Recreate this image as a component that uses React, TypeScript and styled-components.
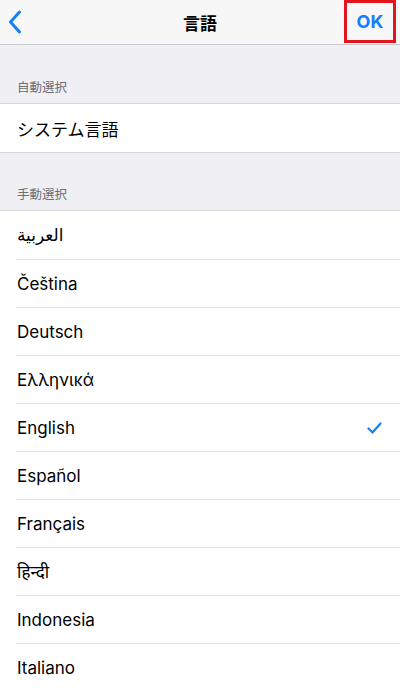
import React from "react";
import styled, { createGlobalStyle } from "styled-components";

const GlobalStyle = createGlobalStyle`
  html, body {
    margin: 0;
    padding: 0;
    background: #efeff4;
    font-family: Inter, "Noto Sans", "DejaVu Sans", "Noto Sans CJK JP", sans-serif;
    -webkit-font-smoothing: antialiased;
  }
`;

const Screen = styled.div`
  width: 400px;
  height: 688px;
  overflow: hidden;
  background: #efeff4;
`;

const NavBar = styled.header`
  height: 44px;
  display: grid;
  grid-template-columns: 60px 1fr 60px;
  align-items: center;
  background: #f7f7f8;
  border-bottom: 1px solid #c8c7cc;
`;

const BackButton = styled.button`
  border: 0;
  background: none;
  padding: 0 0 0 8px;
  height: 44px;
  display: flex;
  align-items: center;
`;

const Title = styled.h1`
  margin: 0;
  text-align: center;
  font-family: "Noto Sans CJK JP", sans-serif;
  font-size: 17px;
  font-weight: 700;
  color: #000;
`;

const OkButton = styled.button`
  justify-self: end;
  align-self: start;
  margin-right: 4px;
  width: 52px;
  height: 43px;
  box-sizing: border-box;
  border: 3px solid #e3141d;
  background: none;
  color: #157efb;
  font-family: Inter, "Noto Sans", sans-serif;
  font-size: 18px;
  font-weight: 700;
  padding: 0;
`;

const SectionHeader = styled.div<{ $height: number }>`
  height: ${(p) => p.$height}px;
  display: flex;
  align-items: flex-end;
  padding: 0 17px 7px;
  box-sizing: border-box;
  font-family: "Noto Sans CJK JP", sans-serif;
  font-size: 12.5px;
  color: #6d6d72;
`;

const Group = styled.ul`
  margin: 0;
  padding: 0;
  list-style: none;
  background: #fff;
  border-top: 1px solid #d8d8dc;
  border-bottom: 1px solid #d8d8dc;
`;

const Row = styled.li`
  height: 48px;
  display: flex;
  align-items: center;
  justify-content: space-between;
  margin-left: 17px;
  padding-right: 18px;
  font-size: 17px;
  color: #000;
  box-sizing: border-box;

  & + & {
    border-top: 1px solid #e0e0e4;
    margin-left: 16px;
    padding-left: 1px;
  }
`;

const Label = styled.span`
  font-family: Inter, "Noto Sans", "DejaVu Sans", "Noto Sans CJK JP", sans-serif;
`;

const languages = [
  "العربية",
  "Čeština",
  "Deutsch",
  "Ελληνικά",
  "English",
  "Español",
  "Français",
  "हिन्दी",
  "Indonesia",
  "Italiano",
];

const ChevronLeft = () => (
  <svg width="14" height="24" viewBox="0 0 14 24">
    <path
      d="M11.5 2 L2.5 12 L11.5 22"
      fill="none"
      stroke="#157efb"
      strokeWidth="3"
      strokeLinecap="round"
      strokeLinejoin="round"
    />
  </svg>
);

const Check = () => (
  <svg width="15" height="12" viewBox="0 0 15 12">
    <path
      d="M1.5 6.5 L5.5 10.5 L13.5 1.5"
      fill="none"
      stroke="#157efb"
      strokeWidth="2.2"
      strokeLinecap="round"
      strokeLinejoin="round"
    />
  </svg>
);

const App: React.FC = () => {
  return (
    <Screen>
      <GlobalStyle />
      <NavBar>
        <BackButton aria-label="戻る">
          <ChevronLeft />
        </BackButton>
        <Title>言語</Title>
        <OkButton>OK</OkButton>
      </NavBar>

      <SectionHeader $height={58}>自動選択</SectionHeader>
      <Group>
        <Row>
          <Label>システム言語</Label>
        </Row>
      </Group>

      <SectionHeader $height={57}>手動選択</SectionHeader>
      <Group>
        {languages.map((lang) => (
          <Row key={lang}>
            <Label>{lang}</Label>
            {lang === "English" && <Check />}
          </Row>
        ))}
      </Group>
    </Screen>
  );
};

export default App;
